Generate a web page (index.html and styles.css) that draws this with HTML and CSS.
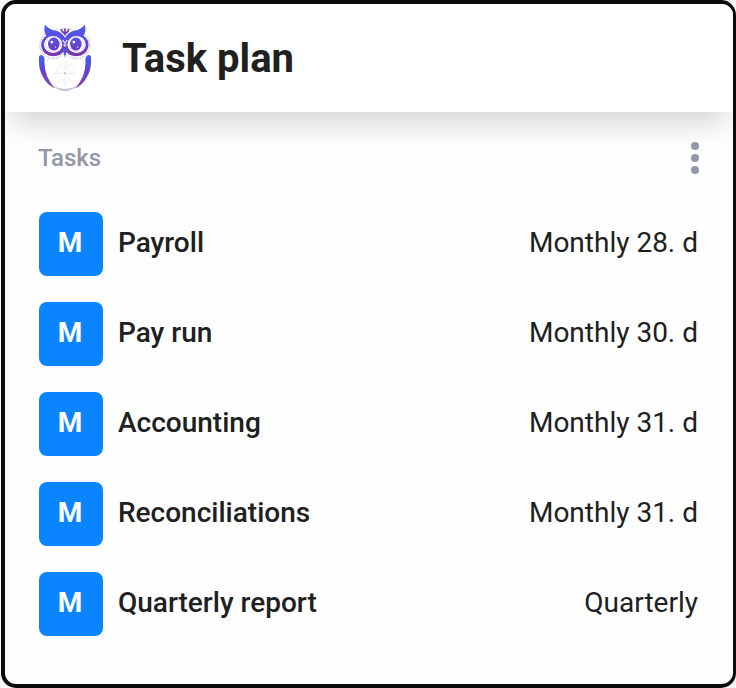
FILE: index.html
```html
<!DOCTYPE html>
<html lang="en">
<head>
<meta charset="utf-8">
<meta name="viewport" content="width=device-width, initial-scale=1">
<title>Task plan</title>
<link rel="stylesheet" href="styles.css">
</head>
<body>
<main class="card">
  <header class="card-header">
    <svg class="logo" viewBox="29 18 158 200" aria-hidden="true">
      <defs>
        <linearGradient id="face" x1="0" y1="20" x2="0" y2="112" gradientUnits="userSpaceOnUse">
          <stop offset="0" stop-color="#4a5cec"/>
          <stop offset=".5" stop-color="#5b4ce0"/>
          <stop offset="1" stop-color="#7a35a8"/>
        </linearGradient>
        <linearGradient id="wing" x1="0" y1="108" x2="0" y2="210" gradientUnits="userSpaceOnUse">
          <stop offset="0" stop-color="#3f62f2"/>
          <stop offset=".5" stop-color="#6a40cc"/>
          <stop offset="1" stop-color="#8d45a8"/>
        </linearGradient>
      </defs>
      <path d="M70 40Q108 22 146 40" fill="none" stroke="#d3cbe0" stroke-width="4" stroke-dasharray="4 3"/>
      <circle cx="73" cy="80" r="39" fill="none" stroke="#c9b8df" stroke-width="4" stroke-dasharray="3 3"/>
      <circle cx="142" cy="80" r="39" fill="none" stroke="#c9b8df" stroke-width="4" stroke-dasharray="3 3"/>
      <path d="M49 20Q63 36 83 38Q100 44 108 59Q116 44 133 38Q153 36 166 20Q172 39 162 52Q180 66 177 83Q173 112 141 113Q120 112 112 99L108 110L103 99Q95 112 74 113Q42 112 38 83Q36 66 53 52Q44 39 49 20Z" fill="url(#face)"/>
      <ellipse cx="73" cy="78" rx="27" ry="25" fill="#fff"/>
      <ellipse cx="142" cy="78" rx="27" ry="25" fill="#fff"/>
      <circle cx="73" cy="78" r="22" fill="none" stroke="#a79ade" stroke-width="2" stroke-dasharray="3 3"/>
      <circle cx="142" cy="78" r="22" fill="none" stroke="#a79ade" stroke-width="2" stroke-dasharray="3 3"/>
      <ellipse cx="75" cy="77" rx="17" ry="19" fill="url(#face)"/>
      <ellipse cx="140" cy="77" rx="17" ry="19" fill="url(#face)"/>
      <g fill="#fff"><circle cx="69" cy="71" r="4"/><circle cx="134" cy="71" r="4"/><circle cx="80" cy="86" r="2"/><circle cx="145" cy="86" r="2"/></g>
      <path d="M101 65L108 75L115 65M104 78L108 83L112 78" fill="none" stroke="#dcd5fa" stroke-width="4"/>
      <path d="M101 88L108 117L115 88L108 93Z" fill="#4659e5"/>
      <path d="M108 31V52M97 33Q98 42 108 46Q118 42 119 33" fill="none" stroke="#783ab2" stroke-width="5"/>
      <path d="M32 112Q43 104 48 120Q44 169 78 207Q57 199 45 177Q28 150 32 112Z" fill="url(#wing)"/>
      <path d="M184 112Q173 104 168 120Q172 169 138 207Q159 199 171 177Q188 150 184 112Z" fill="url(#wing)"/>
      <path d="M67 196Q108 235 149 196Q108 221 67 196Z" fill="#cdc1d5"/>
      <path d="M56 126Q68 116 85 121M133 121Q150 116 161 126" fill="none" stroke="#cfc8db" stroke-width="4" stroke-dasharray="2 5"/>
      <g fill="none" stroke="#d5d0dc" stroke-width="2" stroke-dasharray="4 2">
        <path d="M105 127V154M111 127V154M105 172V198M111 172V198M74 163H98M118 163H142"/>
        <path d="M92 136L98 150M124 136L118 150M92 190L98 176M124 190L118 176M82 151L90 160M82 175L90 166M134 151L126 160M134 175L126 166"/>
      </g>
      <circle cx="108" cy="163" r="4" fill="#c9c1d2"/>
    </svg>
    <h1 class="title">Task plan</h1>
  </header>
  <section class="tasks">
    <div class="tasks-header">
      <h2 class="tasks-title">Tasks</h2>
      <button class="menu" type="button" aria-label="Task options">
        <svg class="menu-icon" viewBox="0 0 8 32" aria-hidden="true">
          <circle cx="4" cy="4" r="4"/><circle cx="4" cy="16" r="4"/><circle cx="4" cy="28" r="4"/>
        </svg>
      </button>
    </div>
    <ul class="list">
      <li class="task"><span class="badge">M</span><span class="name">Payroll</span><span class="schedule">Monthly 28. d</span></li>
      <li class="task"><span class="badge">M</span><span class="name">Pay run</span><span class="schedule">Monthly 30. d</span></li>
      <li class="task"><span class="badge">M</span><span class="name">Accounting</span><span class="schedule">Monthly 31. d</span></li>
      <li class="task"><span class="badge">M</span><span class="name">Reconciliations</span><span class="schedule">Monthly 31. d</span></li>
      <li class="task"><span class="badge">M</span><span class="name">Quarterly report</span><span class="schedule">Quarterly</span></li>
    </ul>
  </section>
</main>
</body>
</html>
```
FILE: styles.css
```css
* {
  box-sizing: border-box;
}

body {
  margin: 0;
  padding-left: 1px;
  background: #f6f6f6;
  color: #202021;
  font-family: Roboto, "Liberation Sans", sans-serif;
}

h1,
h2,
ul {
  margin: 0;
  padding: 0;
}

.card {
  overflow: hidden;
  min-height: 100vh;
  border: 4px solid #0b0c0d;
  border-right-width: 3px;
  border-radius: 15px;
  background: #fefefe;
}

.card-header {
  display: flex;
  align-items: center;
  gap: 30px;
  height: 108px;
  padding: 0 33px;
  background: #fff;
  box-shadow: 0 16px 32px -8px rgba(0, 0, 0, 0.2);
}

.logo {
  width: 54px;
  height: 68px;
}

.title {
  padding-top: 2px;
  font-size: 40px;
  font-weight: 700;
  line-height: 48px;
}

.tasks {
  padding: 30px 34px 48px 33px;
}

.tasks-header {
  display: flex;
  align-items: center;
  justify-content: space-between;
  height: 32px;
}

.tasks-title {
  color: #9398a7;
  font-size: 24px;
  font-weight: 500;
  line-height: 32px;
}

.menu {
  display: flex;
  padding: 0;
  border: 0;
  background: none;
  cursor: pointer;
}

.menu-icon {
  width: 8px;
  height: 32px;
  fill: #9398a8;
}

.list {
  display: grid;
  gap: 26px;
  padding: 38px 1px 0;
  list-style: none;
}

.task {
  display: flex;
  align-items: center;
  font-size: 28px;
  line-height: 32px;
}

.badge {
  display: grid;
  place-items: center;
  width: 64px;
  height: 64px;
  padding: 0 2px 2px 0;
  border-radius: 8px;
  background: #0a84ff;
  color: #fff;
  font-weight: 700;
}

.name {
  flex: 1;
  padding: 0 15px 2px;
  font-weight: 500;
}

.schedule {
  padding-bottom: 2px;
}
```
